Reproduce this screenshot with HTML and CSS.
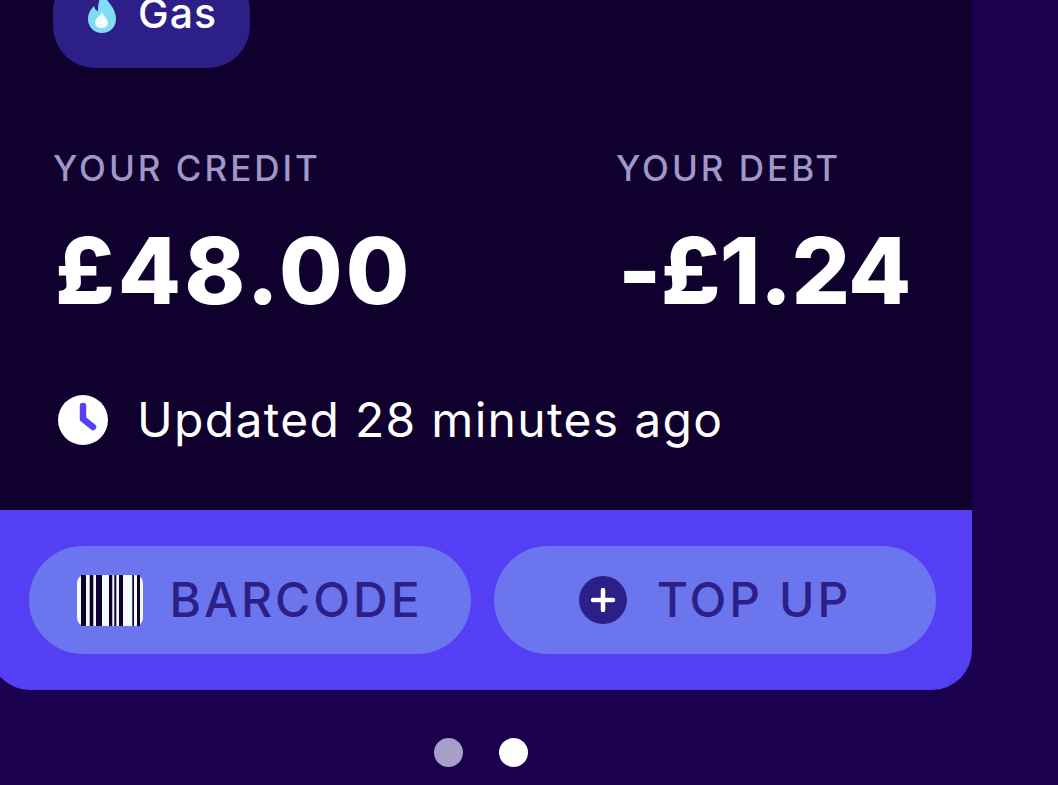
FILE: index.html
```html
<!DOCTYPE html>
<html lang="en">
<head>
<meta charset="utf-8">
<title>Account</title>
<link rel="stylesheet" href="styles.css">
</head>
<body>
<main class="card">
  <section class="panel">
    <div class="fuel-pill">
      <svg class="flame" viewBox="0 0 28 40" aria-hidden="true">
        <path class="flame-outer" d="M15 0C17 7 28 14 28 26C28 34 22 40 14 40C6 40 0 34 0 26C0 20 3 16 6 13C7 17 9 18 10 18C10 11 11 5 15 0Z"/>
        <path class="flame-inner" d="M14 19C15 23 20 26 20 30C20 33 17 35 13.500 35C10 35 7 33 7 29.500C7 25 12 24 14 19Z"/>
      </svg>
      <span class="fuel-name">Gas</span>
    </div>
    <div class="stats">
      <div class="stat">
        <div class="stat-label">YOUR CREDIT</div>
        <div class="stat-value">£48.00</div>
      </div>
      <div class="stat">
        <div class="stat-label">YOUR DEBT</div>
        <div class="stat-value stat-value-tight">-£1.24</div>
      </div>
    </div>
    <div class="updated">
      <svg class="clock" viewBox="0 0 50 50" aria-hidden="true">
        <circle cx="25" cy="25" r="25" fill="#fff"/>
        <path d="M25 11V24L35 32" fill="none" stroke="#5540f5" stroke-width="6.5" stroke-linecap="round" stroke-linejoin="round"/>
      </svg>
      <span>Updated 28 minutes ago</span>
    </div>
  </section>
  <footer class="actions">
    <button class="action">
      <svg class="barcode" viewBox="0 0 66 51" aria-hidden="true">
        <rect width="66" height="51" rx="8" fill="#f4f8ff"/>
        <path fill="#10002e" d="M4 0h5v51H4zM12.700 0h3.600v51h-3.600zM19 0h6v51h-6zM32 0h3.300v51H32zM37.300 0h2v51h-2zM42 0h4v51h-4zM55.300 0h1.700v51h-1.700zM60 0h3v51h-3z"/>
      </svg>
      <span>BARCODE</span>
    </button>
    <button class="action">
      <svg class="plus" viewBox="0 0 48 48" aria-hidden="true">
        <circle cx="24" cy="24" r="24" fill="#2d1f88"/>
        <path d="M24 14V34M14 24H34" stroke="#fff" stroke-width="4.500" stroke-linecap="round"/>
      </svg>
      <span>TOP UP</span>
    </button>
  </footer>
</main>
<nav class="dots">
  <span class="dot"></span>
  <span class="dot dot-active"></span>
</nav>
</body>
</html>
```
FILE: styles.css
```css
* { box-sizing: border-box; }
html, body { margin: 0; height: 785px; overflow: hidden; }
body {
  background: #1a004f;
  font-family: Inter, "Liberation Sans", sans-serif;
  color: #fff;
}
.card {
  width: 982px;
  margin-left: -10px;
  border-radius: 0 0 40px 40px;
  overflow: hidden;
  background: #553ff5;
}
.panel {
  display: flow-root;
  height: 510px;
  background: #10002e;
  padding-left: 63px;
}
.fuel-pill {
  width: 197px;
  height: 98px;
  margin-top: -30px;
  background: #2d1f88;
  border-radius: 42px;
  display: flex;
  align-items: center;
  gap: 22px;
  padding: 0 0 12px 35px;
}
.flame { width: 28px; height: 40px; }
.flame-outer { fill: #7fdcf5; }
.flame-inner { fill: #f2fcff; }
.fuel-name { font-size: 41px; font-weight: 500; letter-spacing: 1px; }
.stats {
  display: grid;
  grid-template-columns: 563px auto;
  margin-top: 80px;
}
.stat-label {
  font-size: 35px;
  line-height: 40px;
  font-weight: 500;
  letter-spacing: 3px;
  color: #a097c6;
}
.stat-value {
  margin-top: 35px;
  margin-left: 2px;
  font-size: 92px;
  line-height: 96px;
  font-weight: 800;
  letter-spacing: 3px;
}
.stat-value-tight { letter-spacing: -0.700px; }
.updated {
  display: flex;
  align-items: center;
  gap: 29px;
  margin-top: 74px;
  margin-left: 5px;
  font-size: 48px;
  line-height: 54px;
  letter-spacing: 1.300px;
}
.clock { width: 50px; height: 50px; }
.actions {
  height: 180px;
  display: flex;
  gap: 23px;
  padding: 36px 0 0 39px;
}
.action {
  width: 442px;
  height: 108px;
  border: 0;
  border-radius: 54px;
  background: #6b76ee;
  color: #2d1f88;
  font: 500 48px/1 Inter, "Liberation Sans", sans-serif;
  letter-spacing: 3px;
  display: flex;
  align-items: center;
  justify-content: center;
  gap: 26px;
  padding: 0;
}
.barcode { width: 66px; height: 51px; }
.plus { width: 48px; height: 48px; margin-right: 4px; }
.dots {
  display: flex;
  justify-content: center;
  gap: 36px;
  margin-top: 48px;
  width: 961px;
}
.dot {
  width: 29px;
  height: 29px;
  border-radius: 50%;
  background: #a79fc8;
}
.dot-active { background: #fff; }
```
